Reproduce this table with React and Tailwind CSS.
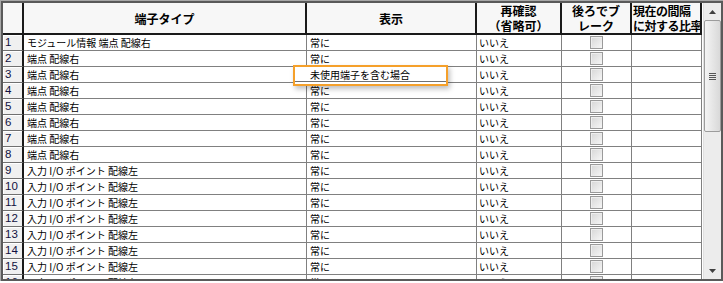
const rows = [
  { no: 1, name: 'モジュール情報 端点 配線右', show: '常に' },
  { no: 2, name: '端点 配線右', show: '常に' },
  { no: 3, name: '端点 配線右', show: '' },
  { no: 4, name: '端点 配線右', show: '常に' },
  { no: 5, name: '端点 配線右', show: '常に' },
  { no: 6, name: '端点 配線右', show: '常に' },
  { no: 7, name: '端点 配線右', show: '常に' },
  { no: 8, name: '端点 配線右', show: '常に' },
  { no: 9, name: '入力 I/O ポイント 配線左', show: '常に' },
  { no: 10, name: '入力 I/O ポイント 配線左', show: '常に' },
  { no: 11, name: '入力 I/O ポイント 配線左', show: '常に' },
  { no: 12, name: '入力 I/O ポイント 配線左', show: '常に' },
  { no: 13, name: '入力 I/O ポイント 配線左', show: '常に' },
  { no: 14, name: '入力 I/O ポイント 配線左', show: '常に' },
  { no: 15, name: '入力 I/O ポイント 配線左', show: '常に' },
  { no: 16, name: '入力 I/O ポイント 配線左', show: '常に' },
]

const jp = { fontFamily: '"Noto Sans CJK JP", "Noto Sans", sans-serif' }

function Checkbox() {
  return (
    <div className="w-[13px] h-[13px] border border-[#9a9a9a] bg-gradient-to-br from-[#d6d6d6] to-[#f6f6f6] shadow-[inset_1px_1px_0_#eeeeee]" />
  )
}

function HeaderCell({ w, children, className = '' }) {
  return (
    <div
      className={`${w} h-full shrink-0 border-r-2 border-[#1a1a1a] bg-[#f7f7f7] flex items-center font-bold text-[12px] leading-[15px] text-black overflow-hidden ${className}`}
    >
      {children}
    </div>
  )
}

function Row({ r }) {
  return (
    <div className="flex h-[16px] shrink-0 text-[10px] leading-[15px] text-black">
      <div className="w-[21px] shrink-0 border-r-2 border-r-[#1a1a1a] border-b border-b-[#707070] bg-[#f0f0f0] shadow-[inset_1px_1px_0_#ffffff] pl-[2px] text-[11.5px] text-[#101040]" style={{ fontFamily: '"Liberation Sans", Arial, sans-serif' }}>
        {r.no}
      </div>
      <div className="w-[283px] shrink-0 border-r border-b border-[#808080] pl-[3px] whitespace-nowrap overflow-hidden">{r.name}</div>
      <div className="w-[170px] shrink-0 border-r border-b border-[#808080] pl-[3px] whitespace-nowrap overflow-hidden">{r.show}</div>
      <div className="w-[85px] shrink-0 border-r border-b border-[#808080] pl-[2px]">いいえ</div>
      <div className="w-[70px] shrink-0 border-r border-b border-[#808080] flex items-start justify-center pt-[1px]">
        <Checkbox />
      </div>
      <div className="w-[70px] shrink-0 border-r border-b border-[#808080]" />
    </div>
  )
}

function Scrollbar() {
  return (
    <div className="w-[18px] h-full shrink-0 flex flex-col bg-[#ececec] border-l border-[#e0e0e0]">
      <div className="h-[17px] flex items-center justify-center">
        <svg width="7" height="4" viewBox="0 0 7 4"><path d="M0 4 L3.5 0 L7 4 Z" fill="#404040" /></svg>
      </div>
      <div className="h-[112px] rounded-[2px] border border-[#9c9c9c] bg-gradient-to-r from-[#f4f4f4] to-[#d9d9d9] flex flex-col items-center justify-center gap-[1px]">
        <div className="w-[7px] h-[1px] bg-[#555]" />
        <div className="w-[7px] h-[1px] bg-[#555]" />
        <div className="w-[7px] h-[1px] bg-[#555]" />
        <div className="w-[7px] h-[1px] bg-[#555]" />
      </div>
      <div className="flex-1" />
      <div className="h-[17px] flex items-center justify-center">
        <svg width="7" height="4" viewBox="0 0 7 4"><path d="M0 0 L7 0 L3.5 4 Z" fill="#404040" /></svg>
      </div>
    </div>
  )
}

export default function App() {
  return (
    <div className="relative w-[723px] h-[283px] bg-white" style={jp}>
      <div className="w-[723px] h-[281px] border-t border-l border-[#a8a8a8]">
        <div className="w-[722px] h-[280px] border-2 border-[#5a5a5a] flex overflow-hidden">
          <div className="w-[699px] shrink-0 flex flex-col overflow-hidden bg-white">
            <div className="flex h-[32px] shrink-0 border-b-2 border-[#1a1a1a]">
              <HeaderCell w="w-[21px]" className="bg-[#ededed]" />
              <HeaderCell w="w-[283px]" className="justify-center">端子タイプ</HeaderCell>
              <HeaderCell w="w-[170px]" className="justify-center">表示</HeaderCell>
              <HeaderCell w="w-[85px]" className="justify-center text-center">
                <span>再確認<br />（省略可）</span>
              </HeaderCell>
              <HeaderCell w="w-[70px]" className="justify-center text-center">
                <span>後ろでブ<br />レーク</span>
              </HeaderCell>
              <HeaderCell w="w-[70px]" className="pl-[1px] tracking-[-0.5px] whitespace-nowrap">
                <span>現在の間隔<br />に対する比率</span>
              </HeaderCell>
            </div>
            {rows.map((r) => (
              <Row key={r.no} r={r} />
            ))}
          </div>
          <div className="w-[1px] shrink-0 bg-white" />
          <Scrollbar />
        </div>
      </div>

      {/* edit popup */}
      <div className="absolute left-[293px] top-[65px] w-[155px] h-[21px] border-2 border-[#f5a02a] bg-white shadow-[2px_3px_5px_rgba(0,0,0,0.25)]">
        <div className="h-[15px] border-b border-[#707070] pl-[15px] text-[10px] leading-[15px] text-black whitespace-nowrap">
          未使用端子を含む場合
        </div>
      </div>
    </div>
  )
}
